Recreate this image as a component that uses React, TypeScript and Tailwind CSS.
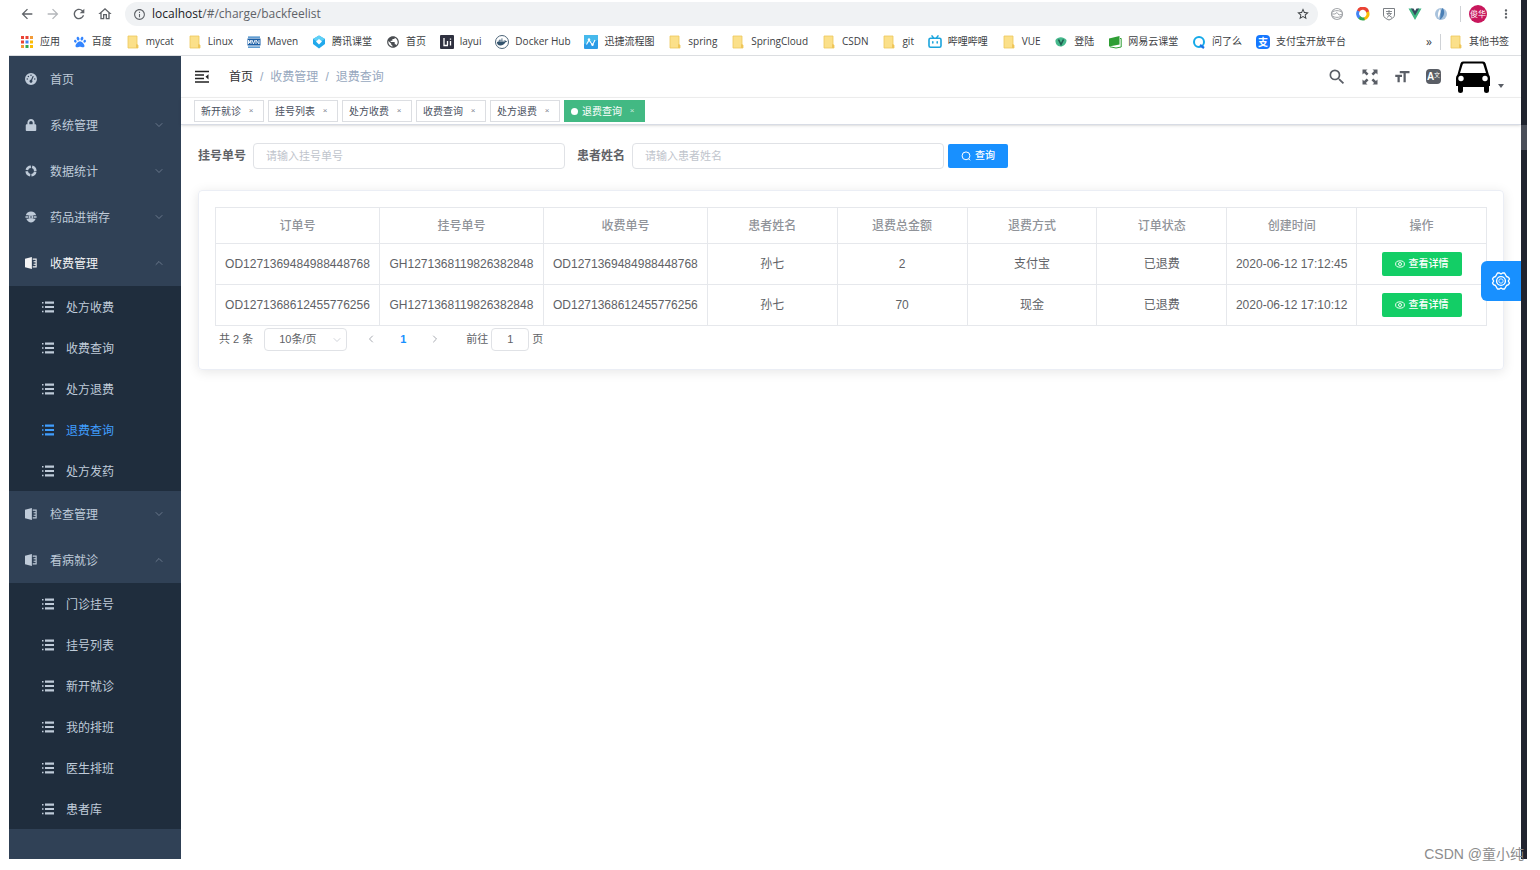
import React from "react";
import { MdArrowBack, MdArrowForward, MdRefresh, MdOutlineHome, MdOutlineInfo, MdStarBorder, MdMoreVert, MdFormatSize, MdSearch, MdPublic } from "react-icons/md";
import { FaPaw, FaLock, FaDocker } from "react-icons/fa";
import { FaGaugeHigh } from "react-icons/fa6";
import { ChevronDown, ChevronUp, ChevronLeft, ChevronRight } from "lucide-react";

// ---------- icons ----------

const Folder = () => (
  <svg viewBox="0 0 14 14" className="size-[14px]">
    <path d="M2 1h9v9h1v3H2z" fill="#fbe08a" stroke="#eec85a" strokeWidth="0.8" />
    <path d="M10 9l2 1v3h-2z" fill="#efc65a" />
  </svg>
);

const AppsIcon = () => (
  <svg viewBox="0 0 14 14" className="size-[14px]">
    <path d="M1 1h3v3H1zM1 5.500h3v3H1zM5.500 1h3v3h-3z" fill="#ea4335" />
    <path d="M10 1h3v3h-3zM1 10h3v3H1z" fill="#f29b38" />
    <path d="M5.500 5.500h3v3h-3z" fill="#4285f4" />
    <path d="M10 5.500h3v3h-3zM10 10h3v3h-3z" fill="#fbbc05" />
    <path d="M5.500 10h3v3h-3z" fill="#34a853" />
  </svg>
);

const MavenIcon = () => (
  <svg viewBox="0 0 14 14" className="size-[14px]">
    <path d="M1 1.500h12v1.200H1zM1 11.500h12v1.200H1z" fill="#2f7fc4" />
    <rect x="0.500" y="3.500" width="13" height="7" fill="#1b5fa6" />
    <path d="M1.500 9V5l1.300 3L4 5v4M5 5l1.500 4L8 5M9 9V5l3 4V5" fill="none" stroke="#fff" strokeWidth="0.900" />
  </svg>
);

const ClassIcon = () => (
  <svg viewBox="0 0 14 14" className="size-[14px]">
    <path d="M7 0.500L13 4v5L7 13.500 1 9V4z" fill="#21a9ec" />
    <path d="M7 0.500L13 4 7 7.500 1 4z" fill="#5fd0f6" />
    <path d="M7 4l3 2.500-3 3-3-3z" fill="#fff" />
  </svg>
);

const LayuiIcon = () => (
  <svg viewBox="0 0 14 14" className="size-[14px]">
    <rect width="14" height="14" rx="1" fill="#2f3140" />
    <path d="M4 3v7.500h4M7.500 6v4M10.500 6v4.500M10.500 3.500v1.200" fill="none" stroke="#fff" strokeWidth="1.300" />
  </svg>
);

const DockerIcon = () => (
  <span className="flex size-[14px] items-center justify-center rounded-full border border-[#4c6478]">
    <FaDocker className="size-[10px] text-[#33536d]" />
  </span>
);

const FlowIcon = () => (
  <svg viewBox="0 0 14 14" className="size-[14px]">
    <rect width="14" height="14" rx="1" fill="#2c9be6" />
    <path d="M0 0h14v5L0 9z" fill="#46b9ec" />
    <path d="M2.500 9.500L5 5l3.500 5L11 5" fill="none" stroke="#fff" strokeWidth="1.100" />
    <circle cx="5" cy="4.500" r="1.200" fill="#fff" />
    <circle cx="8.500" cy="9.800" r="1.200" fill="#fff" />
  </svg>
);

const BiliIcon = () => (
  <svg viewBox="0 0 14 14" className="size-[14px]">
    <path d="M4 0.800L5.500 3M10 0.800L8.500 3M4.800 6.800v1.200M9.200 6.800v1.200" stroke="#1ba4dc" strokeWidth="1.500" strokeLinecap="round" />
    <rect x="1" y="3.200" width="12" height="9" rx="1.500" fill="none" stroke="#1ba4dc" strokeWidth="1.600" />
  </svg>
);

const LoginIcon = () => (
  <svg viewBox="0 0 14 14" className="size-[14px]">
    <path d="M1.500 5C4 1.500 9 1 12.500 5c0 4-3 6.500-6 6.500C3 11.500 1 8 1.500 5z" fill="#46b98c" />
    <path d="M4.500 4.500L7 9.500l2.500-5" fill="none" stroke="#1f5c50" strokeWidth="1.600" />
  </svg>
);

const NeteaseIcon = () => (
  <svg viewBox="0 0 14 14" className="size-[14px]">
    <path d="M1 3.500L11.500 1v8.500L1 11.500z" fill="#2f9e35" />
    <path d="M12 3.500h1.200V12L8 13l-6-1.200" fill="none" stroke="#2f9e35" strokeWidth="1" />
  </svg>
);

const AskIcon = () => (
  <svg viewBox="0 0 14 14" className="size-[14px]">
    <circle cx="7" cy="7" r="5" fill="none" stroke="#14a9e8" strokeWidth="2" />
    <path d="M8 10l4 3" stroke="#1a73e8" strokeWidth="2.200" />
  </svg>
);

const AlipayIcon = () => (
  <span className="flex size-[14px] items-center justify-center rounded-sm bg-[#1677ff] text-[10px] leading-none font-bold text-white">支</span>
);

const VueIcon = () => (
  <svg viewBox="0 0 14 14" className="size-[14px]">
    <path d="M0.500 1.500H4L7 6.700l3-5.200h3.500L7 13z" fill="#41b883" />
    <path d="M3 1.500h2.500L7 4l1.500-2.500H11L7 8.500z" fill="#35495e" />
  </svg>
);

const RingIcon = () => (
  <svg viewBox="0 0 14 14" className="size-[14px]" fill="none" strokeWidth="3">
    <path d="M2.200 4.300A5 5 0 0 1 11.800 5.500" stroke="#ea4335" />
    <path d="M11.500 4.800A5 5 0 0 1 8 11.900" stroke="#fbbc05" />
    <path d="M8.500 11.800A5 5 0 0 1 3 10" stroke="#34a853" />
    <path d="M3.400 10.500A5 5 0 0 1 2.400 4" stroke="#4285f4" />
  </svg>
);

const ShieldIcon = () => (
  <svg viewBox="0 0 14 14" className="size-[14px]" fill="none" stroke="#7b7f84">
    <path d="M1.500 1.500h11V8c0 2.500-3 4-5.500 5C4.500 12 1.500 10.500 1.500 8z" />
    <path d="M4 4.500h6M7 3v3M4.500 6.500h5L5 10.500M5 7l5 3.500" strokeWidth="0.900" />
  </svg>
);

const CompassIcon = () => (
  <svg viewBox="0 0 14 14" className="size-[14px]">
    <circle cx="7" cy="7" r="6" fill="#a9c3dd" />
    <path d="M8.500 1c3 3 2 9-3 12C7.500 9 5 6 8.500 1z" fill="#4a7fb5" />
    <path d="M6 2C3.500 5 3.500 9 5 11c0-3 2.500-5 1-9z" fill="#fff" />
  </svg>
);

const WebIcon = () => (
  <svg viewBox="0 0 14 14" className="size-[14px]" fill="none" stroke="#a3a6aa">
    <circle cx="7" cy="7" r="5.500" strokeWidth="1.200" />
    <path d="M1.500 5.500C5 3 9 3 12.500 5.500M1.500 8.500C5 11 9 11 12.500 8.500M1 7h4l2-1.500L9 8l4-1" />
  </svg>
);

const DashIcon = () => <FaGaugeHigh className="size-3" />;
const LockIcon = () => <FaLock className="size-3" />;

const TargetIcon = () => (
  <svg viewBox="0 0 14 14" className="size-3">
    <circle cx="7" cy="7" r="5" fill="none" stroke="currentColor" strokeWidth="3" strokeDasharray="6.400 1.454" strokeDashoffset="-0.727" />
  </svg>
);

const DrugIcon = () => (
  <svg viewBox="0 0 14 14" className="size-3">
    <path d="M7 0.500c3 0 5.500 1.800 6 4.500H1C1.500 2.300 4 0.500 7 0.500zM1.500 9h11C11.500 11.500 9 13.300 7 13.300S2.500 11.500 1.500 9z" fill="currentColor" />
    <path d="M0.500 7h3M5 5.800h4v2.400H5zM10.500 7h3" fill="none" stroke="currentColor" strokeWidth="1.500" />
  </svg>
);

const BookIcon = () => (
  <svg viewBox="0 0 14 14" className="size-3">
    <path d="M0 2L8 0v14L0 12z" fill="currentColor" />
    <path d="M9 2.500h4v9H9M10 5.500H13M10 8.500H13" fill="none" stroke="currentColor" strokeWidth="1.300" />
  </svg>
);

const ListIcon = () => (
  <svg viewBox="0 0 12 12" className="size-3" fill="currentColor">
    <path d="M0 1h1.500v1.500H0zM3 0.500h9v2.200H3zM0 5.300h1.500v1.500H0zM3 5h9v2H3zM0 9.800h1.500v1.500H0zM3 9.300h9v2.200H3z" />
  </svg>
);

const FoldIcon = () => (
  <svg viewBox="0 0 14 14" className="size-[14px]">
    <path d="M0 1.500h14M0 5h9M0 8.500h9M0 12h14" stroke="#222" strokeWidth="1.300" />
    <path d="M13.500 4.200v5.200L10.500 6.800z" fill="#222" />
  </svg>
);

const FullscreenIcon = () => (
  <svg viewBox="0 0 16 16" className="size-4" fill="#5a5e66">
    <path d="M0.500 0.500h5L3.900 2.100l2.600 2.600-1.800 1.800-2.600-2.600L0.500 5.500zM15.500 0.500v5l-1.600-1.600-2.600 2.600-1.800-1.800 2.600-2.600L10.500 0.500zM0.500 15.500v-5l1.600 1.600 2.600-2.600 1.800 1.800-2.600 2.600 1.600 1.600zM15.500 15.500h-5l1.600-1.600-2.600-2.600 1.800-1.800 2.600 2.600 1.600-1.600z" />
  </svg>
);

const CarIcon = () => (
  <svg viewBox="0 0 34 34" className="size-[34px]">
    <path d="M7 1.500h20q2 0 2.600 2L33 15q1 1 1 3v8h-1v5q0 2-2.500 2T28 31v-4H7v4q0 2-2.500 2T2 31v-5H0v-8q0-2 1.500-3.500L4.500 3.500Q5 1.500 7 1.500z" fill="#000" />
    <path d="M8 3.500h18q1 0 1.400 1.200L30 13H4l2.600-8.300Q7 3.500 8 3.500z" fill="#fff" />
    <circle cx="5" cy="18.500" r="2.700" fill="#fff" />
    <circle cx="29" cy="18.500" r="2.700" fill="#fff" />
  </svg>
);

const GearIcon = () => (
  <svg viewBox="0 0 20 20" className="size-5" fill="none" stroke="#fff" strokeWidth="1.400" strokeLinejoin="round">
    <path d="M6.500 2h2L10 3l1.500-1h2l2 3.500 2 .8L18.500 8l-1.200 2 1.200 2-1 1.700-2 .8-2 3.500h-2L10 17l-1.500 1h-2l-2-3.500-2-.8L1.500 12l1.200-2-1.200-2 1-1.700 2-.8z" />
    <circle cx="10" cy="10" r="4.400" />
    <circle cx="10" cy="10" r="2.200" strokeWidth="0.800" />
  </svg>
);

const EyeIcon = () => (
  <svg viewBox="0 0 12 12" className="size-[10px]" fill="none" stroke="#fff" strokeWidth="1.100">
    <ellipse cx="6" cy="6" rx="5.300" ry="3.800" />
    <circle cx="6" cy="6" r="1.800" />
  </svg>
);

const QueryIcon = () => (
  <svg viewBox="0 0 12 12" className="size-[10px]" fill="none" stroke="#fff" strokeWidth="1.200">
    <circle cx="6" cy="5.800" r="4.700" />
    <path d="M9 9.200l2 2" />
  </svg>
);

// ---------- data ----------

const bookmarks = [
  { name: "应用", icon: <AppsIcon /> },
  { name: "百度", icon: <FaPaw className="size-3 text-[#3385ff]" /> },
  { name: "mycat", icon: <Folder /> },
  { name: "Linux", icon: <Folder /> },
  { name: "Maven", icon: <MavenIcon /> },
  { name: "腾讯课堂", icon: <ClassIcon /> },
  { name: "首页", icon: <MdPublic className="size-[14px] text-[#4a4d51]" /> },
  { name: "layui", icon: <LayuiIcon /> },
  { name: "Docker Hub", icon: <DockerIcon /> },
  { name: "迅捷流程图", icon: <FlowIcon /> },
  { name: "spring", icon: <Folder /> },
  { name: "SpringCloud", icon: <Folder /> },
  { name: "CSDN", icon: <Folder /> },
  { name: "git", icon: <Folder /> },
  { name: "哔哩哔哩", icon: <BiliIcon /> },
  { name: "VUE", icon: <Folder /> },
  { name: "登陆", icon: <LoginIcon /> },
  { name: "网易云课堂", icon: <NeteaseIcon /> },
  { name: "问了么", icon: <AskIcon /> },
  { name: "支付宝开放平台", icon: <AlipayIcon /> },
];

const menus = [
  { name: "首页", icon: <DashIcon /> },
  { name: "系统管理", icon: <LockIcon />, children: [] },
  { name: "数据统计", icon: <TargetIcon />, children: [] },
  { name: "药品进销存", icon: <DrugIcon />, children: [] },
  { name: "收费管理", icon: <BookIcon />, open: true, active: true, children: ["处方收费", "收费查询", "处方退费", "退费查询", "处方发药"] },
  { name: "检查管理", icon: <BookIcon />, children: [] },
  { name: "看病就诊", icon: <BookIcon />, open: true, children: ["门诊挂号", "挂号列表", "新开就诊", "我的排班", "医生排班", "患者库"] },
];

const tags = ["新开就诊", "挂号列表", "处方收费", "收费查询", "处方退费", "退费查询"];

const columns = ["订单号", "挂号单号", "收费单号", "患者姓名", "退费总金额", "退费方式", "订单状态", "创建时间", "操作"];

const rows = [
  ["OD1271369484988448768", "GH1271368119826382848", "OD1271369484988448768", "孙七", "2", "支付宝", "已退费", "2020-06-12 17:12:45"],
  ["OD1271368612455776256", "GH1271368119826382848", "OD1271368612455776256", "孙七", "70", "现金", "已退费", "2020-06-12 17:10:12"],
];

// ---------- browser bars ----------

const BrowserBar = () => (
  <header className="border-b border-[#dcdee1] bg-white font-['Open_Sans','Noto_Sans_CJK_SC',sans-serif]">
    <div className="flex h-7 items-center gap-3 pr-3 pl-2.5 text-[#5f6368]">
      <div className="flex items-center gap-2.5">
        <button type="button" aria-label="后退"><MdArrowBack className="size-4" /></button>
        <button type="button" aria-label="前进"><MdArrowForward className="size-4 text-[#b4b7bb]" /></button>
        <button type="button" aria-label="刷新"><MdRefresh className="size-4" /></button>
        <button type="button" aria-label="主页"><MdOutlineHome className="size-4" /></button>
      </div>
      <div className="flex h-6 flex-1 items-center gap-1.5 rounded-full bg-[#f0f2f4] px-2">
        <MdOutlineInfo className="size-[13px]" />
        <p className="flex-1 text-xs"><span className="text-[#202124]">localhost</span>/#/charge/backfeelist</p>
        <MdStarBorder className="size-[14px] text-[#3c4043]" />
      </div>
      <WebIcon />
      <RingIcon />
      <ShieldIcon />
      <VueIcon />
      <CompassIcon />
      <span className="h-4 w-px bg-[#cfd2d6]" />
      <span className="-ml-1 flex size-[18px] items-center justify-center rounded-full bg-[#c8175c] text-[8px] text-white">俊华</span>
      <button type="button" aria-label="更多" className="-mr-1"><MdMoreVert className="size-[14px]" /></button>
    </div>
    <nav className="flex h-[27px] items-center pr-3 pl-[11px] text-[10px] text-[#3c4043]">
      <div className="mr-20 flex flex-1 items-center justify-between">
        {bookmarks.map((b) => (
          <a key={b.name} href="#" className="flex items-center gap-1.5 whitespace-nowrap">{b.icon}{b.name}</a>
        ))}
      </div>
      <span className="text-xs">»</span>
      <span className="mx-2 h-4 w-px bg-[#cfd2d6]" />
      <a href="#" className="flex items-center gap-1.5 whitespace-nowrap"><Folder />其他书签</a>
    </nav>
  </header>
);

// ---------- sidebar ----------

const Sidebar = () => (
  <aside className="w-[172px] shrink-0 bg-[#304156] text-xs text-[#bfcbd9]">
    {menus.map((m) => (
      <div key={m.name}>
        <a href="#" className={"flex h-[46px] items-center gap-[13px] px-4 " + (m.active ? "text-[#f4f4f5]" : "")}>
          {m.icon}
          <span className="flex-1 pt-0.5">{m.name}</span>
          {m.children && (m.open
            ? <ChevronUp className="size-3 text-[#7c8a9c]" strokeWidth={1.5} />
            : <ChevronDown className="size-3 text-[#7c8a9c]" strokeWidth={1.5} />)}
        </a>
        {m.open && (
          <ul className="bg-[#1f2d3d]">
            {m.children.map((c) => (
              <li key={c}>
                <a href="#" className={"flex h-[41px] items-center gap-3 pl-[33px] " + (c === "退费查询" ? "text-[#409eff]" : "")}>
                  <ListIcon />
                  <span className="pt-0.5">{c}</span>
                </a>
              </li>
            ))}
          </ul>
        )}
      </div>
    ))}
  </aside>
);

// ---------- top of the page ----------

const Navbar = () => (
  <div className="flex h-[42px] items-center border-b border-[#f0f0f0] pr-[17px] pl-[14px] text-xs">
    <button type="button" aria-label="收起菜单"><FoldIcon /></button>
    <nav className="ml-5 flex gap-[7px] text-[#97a8be]">
      <a href="#" className="text-[#303133]">首页</a>
      <span>/</span>
      <span>收费管理</span>
      <span>/</span>
      <span>退费查询</span>
    </nav>
    <div className="ml-auto flex items-center gap-[15px] text-[#5a5e66]">
      <button type="button" aria-label="搜索"><MdSearch className="size-5" /></button>
      <button type="button" aria-label="全屏"><FullscreenIcon /></button>
      <button type="button" aria-label="字号"><MdFormatSize className="size-[18px]" /></button>
      <button type="button" aria-label="语言" className="flex size-[15px] items-center justify-center rounded-sm bg-[#5a5e66] text-white">
        <span className="text-[10px] leading-none font-bold">A</span>
        <span className="mb-1 text-[6px] leading-none">文</span>
      </button>
      <button type="button" aria-label="用户" className="flex items-end gap-2">
        <CarIcon />
        <span className="mb-1.5 border-x-[3px] border-t-4 border-x-transparent border-t-[#5a5e66]" />
      </button>
    </div>
  </div>
);

const Tags = () => (
  <div className="flex h-[27px] items-center gap-1 border-b border-[#d8dce5] pl-[13px] text-[10px] shadow-sm">
    {tags.map((t) => (
      <a
        key={t}
        href="#"
        className={"flex h-[22px] items-center gap-1 border px-1.5 " + (t === "退费查询" ? "border-[#42b983] bg-[#42b983] text-white" : "border-[#dcdee2] bg-white text-[#495060]")}
      >
        {t === "退费查询" && <span className="size-[7px] rounded-full bg-white" />}
        {t}
        <span className="w-3 text-center text-[8px] opacity-70">×</span>
      </a>
    ))}
  </div>
);

const SearchForm = () => (
  <form className="flex items-center text-xs text-[#606266]">
    <label htmlFor="regId" className="font-bold">挂号单号</label>
    <input id="regId" placeholder="请输入挂号单号" className="ml-[7px] h-[26px] w-78 rounded-sm border border-[#e0e2e6] px-3 text-[11px] placeholder:text-[#c0c4cc]" />
    <label htmlFor="patient" className="ml-3 font-bold">患者姓名</label>
    <input id="patient" placeholder="请输入患者姓名" className="ml-[7px] h-[26px] w-78 rounded-sm border border-[#e0e2e6] px-3 text-[11px] placeholder:text-[#c0c4cc]" />
    <button type="button" className="ml-1 flex h-6 w-[60px] items-center justify-center gap-1 rounded-xs bg-[#1890ff] text-[10px] font-medium text-white">
      <QueryIcon />
      查询
    </button>
  </form>
);

const FeeTable = () => (
  <table className="w-full table-fixed border-collapse text-center text-xs text-[#606266]">
    <thead>
      <tr className="h-9 text-[#909399]">
        {columns.map((c, i) => (
          <th key={c} className={"border border-[#e6e8ec] font-medium " + (i < 3 ? "w-[12.9%]" : "")}>{c}</th>
        ))}
      </tr>
    </thead>
    <tbody>
      {rows.map((r) => (
        <tr key={r[0]} className="h-[41px]">
          {r.map((cell, i) => (
            <td key={i} className="border border-[#e6e8ec] whitespace-nowrap">{cell}</td>
          ))}
          <td className="border border-[#e6e8ec]">
            <button type="button" className="mx-auto flex h-6 w-20 items-center justify-center gap-1 rounded-xs bg-[#13ce66] text-[10px] font-medium text-white">
              <EyeIcon />
              查看详情
            </button>
          </td>
        </tr>
      ))}
    </tbody>
  </table>
);

const Pagination = () => (
  <div className="mt-px flex h-6 items-center pl-1 text-[11px] text-[#606266]">
    <span>共 2 条</span>
    <div className="relative ml-[11px]">
      <select aria-label="每页条数" className="h-[23px] w-[83px] appearance-none rounded-sm border border-[#e0e2e6] pl-[14px]">
        <option>10条/页</option>
      </select>
      <ChevronDown className="pointer-events-none absolute top-1.5 right-1 size-3 text-[#c0c4cc]" strokeWidth={1.5} />
    </div>
    <button type="button" aria-label="上一页" className="ml-2 flex w-8 justify-center"><ChevronLeft className="size-3 text-[#a8abb2]" /></button>
    <button type="button" className="w-8 font-bold text-[#1890ff]">1</button>
    <button type="button" aria-label="下一页" className="flex w-8 justify-center"><ChevronRight className="size-3 text-[#a8abb2]" /></button>
    <label htmlFor="pageNo" className="ml-[15px]">前往</label>
    <input id="pageNo" defaultValue="1" className="mx-[3px] h-[23px] w-[38px] rounded-sm border border-[#e0e2e6] text-center" />
    <span>页</span>
  </div>
);

const App = () => {
  return (
    <div className="relative flex min-h-screen bg-white pr-[13px] pb-[11px] pl-[9px] font-['Liberation_Sans','Noto_Sans_CJK_SC',sans-serif]">
      <div className="flex min-w-0 flex-1 flex-col">
        <BrowserBar />
        <div className="flex flex-1">
          <Sidebar />
          <main className="relative min-w-0 flex-1">
            <Navbar />
            <Tags />
            <div className="px-[17px] pt-[18px]">
              <SearchForm />
              <section className="mt-[21px] rounded-sm border border-[#ebeef5] px-4 pt-4 pb-[18px] shadow-[0_2px_12px_rgba(0,0,0,0.1)]">
                <FeeTable />
                <Pagination />
              </section>
            </div>
            <button type="button" aria-label="设置" className="absolute top-[205px] right-0 flex size-10 items-center justify-center rounded-l-md bg-[#1890ff]">
              <GearIcon />
            </button>
          </main>
        </div>
      </div>
      {/* window scrollbar */}
      <div className="w-1.5 shrink-0 bg-[#20242f] pt-[125px]">
        <div className="h-[25px] bg-[#4a4e59]" />
      </div>
      <p className="absolute right-4 bottom-1 text-sm leading-6 text-[#8c8c8c]">CSDN @童小纯</p>
    </div>
  );
};

export default App;
